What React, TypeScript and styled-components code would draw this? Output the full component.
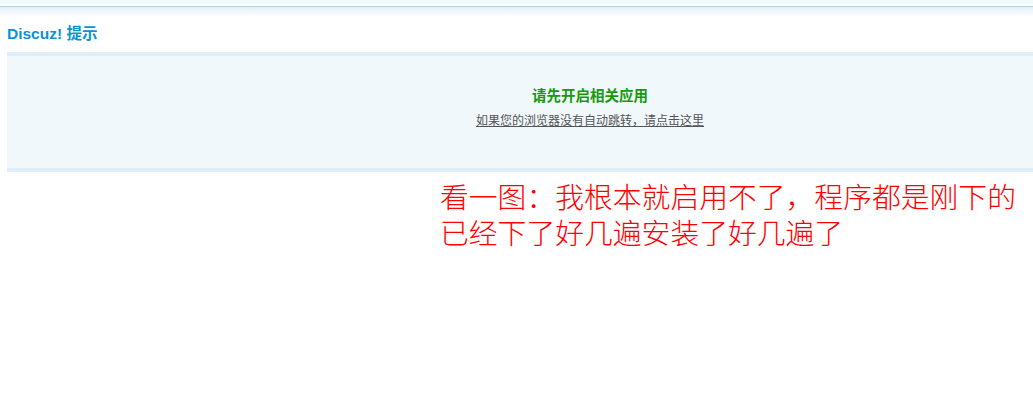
import * as React from "react";
import styled, { createGlobalStyle } from "styled-components";

const GlobalStyle = createGlobalStyle`
  body {
    margin: 0;
    background: #fff;
    font-family: "Noto Sans CJK SC", "Liberation Sans", sans-serif;
  }
`;

const TopBar = styled.div`
  height: 17px;
  background: linear-gradient(
    to bottom,
    #f2f9fd 0,
    #f2f9fd 4px,
    #fff 4px,
    #fff 6px,
    #b4d0e3 6px,
    #b4d0e3 7px,
    #e3eff8 7px,
    #fff 17px
  );
`;

const Title = styled.h3`
  margin: 5px 0 6px 7px;
  font-family: "Liberation Sans", "Noto Sans CJK SC", sans-serif;
  font-size: 15.5px;
  line-height: 24px;
  font-weight: bold;
  color: #0a93cf;
`;

const MessageBox = styled.div`
  margin-left: 7px;
  height: 82px;
  padding: 30px 0 0 140px;
  border-top: 4px solid #deedf8;
  border-bottom: 4px solid #deedf8;
  background: #f1f8fc;
  display: flex;
  flex-direction: column;
  align-items: center;
`;

const Heading = styled.p`
  margin: 0;
  font-size: 14.5px;
  line-height: 18px;
  font-weight: bold;
  color: #169a0c;
`;

const Redirect = styled.a`
  margin-top: 8px;
  font-size: 12px;
  line-height: 16px;
  color: #555;
  text-decoration: underline;
  cursor: pointer;
`;

const Note = styled.div`
  margin: 6px 0 0 440px;
  font-size: 28.8px;
  line-height: 36px;
  color: #ff0000;
  font-weight: 300;
`;

export default function App() {
  return (
    <>
      <GlobalStyle />
      <TopBar />
      <Title>Discuz! 提示</Title>
      <MessageBox>
        <Heading>请先开启相关应用</Heading>
        <Redirect>如果您的浏览器没有自动跳转，请点击这里</Redirect>
      </MessageBox>
      <Note>
        看一图：我根本就启用不了，程序都是刚下的
        <br />
        已经下了好几遍安装了好几遍了
      </Note>
    </>
  );
}
